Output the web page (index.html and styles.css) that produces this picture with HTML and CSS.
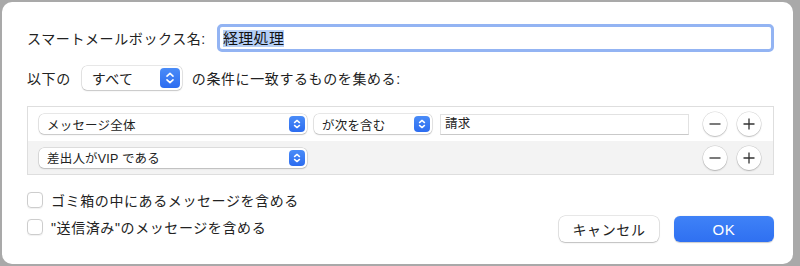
FILE: index.html
```html
<!DOCTYPE html>
<html lang="ja">
<head>
  <meta charset="UTF-8">
  <meta name="viewport" content="width=device-width, initial-scale=1.0">
  <title>スマートメールボックス</title>
  <link rel="stylesheet" href="styles.css">
</head>
<body>
  <div class="dialog">
    <div class="name-row">
      <label class="name-label">スマートメールボックス名:</label>
      <div class="name-field"><span class="selected">経理処理</span></div>
    </div>

    <div class="match-row">
      <span>以下の</span>
      <div class="popup popup-all">
        <span>すべて</span>
        <span class="stepper">
          <svg viewBox="0 0 20 20" width="20" height="20"><path d="M7 8.2 L10 5.4 L13 8.2 M7 11.8 L10 14.6 L13 11.8" fill="none" stroke="#fff" stroke-width="1.6" stroke-linecap="round" stroke-linejoin="round"/></svg>
        </span>
      </div>
      <span>の条件に一致するものを集める:</span>
    </div>

    <div class="criteria">
      <div class="rule">
        <div class="popup popup-small popup-field">
          <span>メッセージ全体</span>
          <span class="stepper">
            <svg viewBox="0 0 16 16" width="16" height="16"><path d="M5.5 6.6 L8 4.4 L10.5 6.6 M5.5 9.4 L8 11.6 L10.5 9.4" fill="none" stroke="#fff" stroke-width="1.4" stroke-linecap="round" stroke-linejoin="round"/></svg>
          </span>
        </div>
        <div class="popup popup-small popup-op">
          <span>が次を含む</span>
          <span class="stepper">
            <svg viewBox="0 0 16 16" width="16" height="16"><path d="M5.5 6.6 L8 4.4 L10.5 6.6 M5.5 9.4 L8 11.6 L10.5 9.4" fill="none" stroke="#fff" stroke-width="1.4" stroke-linecap="round" stroke-linejoin="round"/></svg>
          </span>
        </div>
        <div class="text-input">請求</div>
        <div class="round-btns">
          <span class="round"><svg viewBox="0 0 24 24" width="24" height="24"><path d="M6.5 12 H17.5" stroke="#333" stroke-width="1.3"/></svg></span>
          <span class="round"><svg viewBox="0 0 24 24" width="24" height="24"><path d="M6.5 12 H17.5 M12 6.5 V17.5" stroke="#333" stroke-width="1.3"/></svg></span>
        </div>
      </div>
      <div class="rule rule-alt">
        <div class="popup popup-small popup-field">
          <span>差出人がVIP である</span>
          <span class="stepper">
            <svg viewBox="0 0 16 16" width="16" height="16"><path d="M5.5 6.6 L8 4.4 L10.5 6.6 M5.5 9.4 L8 11.6 L10.5 9.4" fill="none" stroke="#fff" stroke-width="1.4" stroke-linecap="round" stroke-linejoin="round"/></svg>
          </span>
        </div>
        <div class="spacer"></div>
        <div class="round-btns">
          <span class="round"><svg viewBox="0 0 24 24" width="24" height="24"><path d="M6.5 12 H17.5" stroke="#333" stroke-width="1.3"/></svg></span>
          <span class="round"><svg viewBox="0 0 24 24" width="24" height="24"><path d="M6.5 12 H17.5 M12 6.5 V17.5" stroke="#333" stroke-width="1.3"/></svg></span>
        </div>
      </div>
    </div>

    <div class="footer">
      <div class="checks">
        <label class="check-row"><span class="checkbox"></span>ゴミ箱の中にあるメッセージを含める</label>
        <label class="check-row"><span class="checkbox"></span>"送信済み"のメッセージを含める</label>
      </div>
      <div class="buttons">
        <button class="btn">キャンセル</button>
        <button class="btn btn-primary">OK</button>
      </div>
    </div>
  </div>
</body>
</html>
```

FILE: styles.css
```css
html, body {
  margin: 0;
  padding: 0;
}
body {
  background: #a9a9a9;
  padding: 2px 7px 2px 2px;
  font-family: "Liberation Sans", "Noto Sans CJK JP", sans-serif;
  color: #222;
  font-size: 14px;
}
.dialog {
  background: #fff;
  border-radius: 10px;
  height: 262px;
  box-sizing: border-box;
  padding: 22px 19px 0 25px;
}
.name-row {
  display: flex;
  align-items: center;
  height: 28px;
}
.name-label {
  flex: 0 0 190px;
  letter-spacing: 0.6px;
}
.name-field {
  flex: 1;
  height: 28px;
  box-sizing: border-box;
  border: 3px solid #93b4f3;
  border-radius: 5px;
  display: flex;
  align-items: center;
  padding-left: 3px;
}
.selected {
  background: #b5cff6;
  font-size: 15px;
  line-height: 17px;
  letter-spacing: 0.3px;
  color: #111;
}
.match-row {
  display: flex;
  align-items: center;
  gap: 10px;
  margin-top: 14px;
  height: 24px;
  letter-spacing: 0.6px;
}
.match-row > span:first-child {
  margin-right: 1px;
}
.popup {
  display: flex;
  align-items: center;
  justify-content: space-between;
  background: #fff;
  border-radius: 5px;
  box-shadow: 0 0 0 0.5px rgba(0,0,0,0.18), 0 1px 1.5px rgba(0,0,0,0.15);
  box-sizing: border-box;
}
.popup-all {
  width: 100px;
  height: 24px;
  padding: 0 2px 0 10px;
  letter-spacing: 0.4px;
}
.stepper {
  display: flex;
  background: linear-gradient(#4a8cf8, #2c6cf0);
  border-radius: 4px;
}
.popup-all .stepper {
  width: 20px;
  height: 20px;
}
.popup-small {
  height: 20px;
  padding: 0 2px 0 8px;
  font-size: 12.5px;
  letter-spacing: 0.2px;
}
.popup-small .stepper {
  width: 16px;
  height: 16px;
}
.popup-field {
  width: 268px;
}
.popup-op {
  width: 118px;
  margin-left: 7px;
}
.criteria {
  margin-top: 16px;
  border: 1px solid #dedede;
}
.rule {
  display: flex;
  align-items: center;
  height: 34px;
  padding: 0 12px 0 11px;
}
.rule-alt {
  height: 33px;
  background: #f3f3f3;
}
.text-input {
  flex: 1;
  margin-left: 8px;
  height: 21px;
  box-sizing: border-box;
  border: 1px solid #e2e2e2;
  border-bottom-color: #c9c9c9;
  padding-left: 4px;
  font-size: 12.5px;
  line-height: 19px;
  letter-spacing: 0.2px;
}
.spacer {
  flex: 1;
}
.round-btns {
  display: flex;
  gap: 10px;
  margin-left: 14px;
}
.round {
  display: flex;
  width: 24px;
  height: 24px;
  border-radius: 50%;
  background: #fff;
  box-shadow: 0 0 0 0.5px rgba(0,0,0,0.15), 0 1px 1.5px rgba(0,0,0,0.2);
}
.footer {
  display: flex;
  justify-content: space-between;
  align-items: flex-start;
  margin-top: 14px;
}
.checks {
  display: flex;
  flex-direction: column;
  gap: 5px;
}
.check-row {
  display: flex;
  align-items: center;
  height: 22px;
  letter-spacing: 0.6px;
}
.checkbox {
  width: 16px;
  height: 16px;
  box-sizing: border-box;
  border: 1px solid #cdcdcd;
  border-radius: 4px;
  margin-right: 8px;
  box-shadow: 0 0.5px 1px rgba(0,0,0,0.06);
}
.buttons {
  display: flex;
  gap: 15px;
  margin-top: 27px;
}
.btn {
  width: 100px;
  height: 26px;
  border: none;
  border-radius: 6px;
  background: #fff;
  box-shadow: 0 0 0 0.5px rgba(0,0,0,0.18), 0 1px 1.5px rgba(0,0,0,0.18);
  font-family: inherit;
  font-size: 14px;
  letter-spacing: 0.6px;
  color: #222;
  padding: 0;
}
.btn-primary {
  background: linear-gradient(#3f82f7, #2f70f1);
  color: #fff;
  font-size: 15px;
  box-shadow: 0 0.5px 1px rgba(0,0,0,0.2);
}
```
